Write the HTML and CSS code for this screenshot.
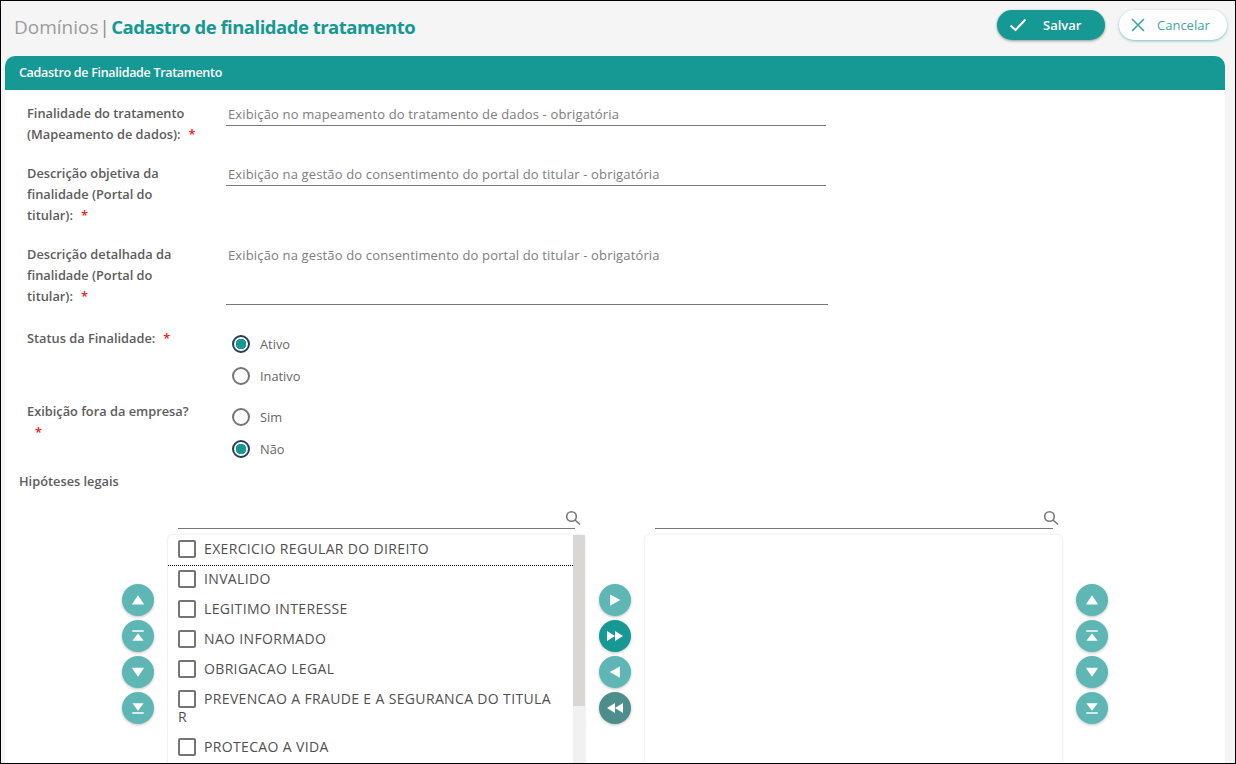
FILE: index.html
```html
<!DOCTYPE html>
<html lang="pt-BR">

<head>
    <meta charset="UTF-8">
    <meta name="viewport" content="width=device-width, initial-scale=1.0">
    <title>Cadastro de finalidade tratamento</title>
    <link rel="stylesheet" href="styles.css">
</head>

<body>
    <svg class="icon-defs" width="0" height="0">
        <symbol id="i-up" viewBox="0 0 16 16"><path d="M8 2.500 15 13H1z" /></symbol>
        <symbol id="i-top" viewBox="0 0 16 16"><path d="M1.500 1.500h13v1.600h-13zM8 5l6.500 8.500h-13z" /></symbol>
        <symbol id="i-down" viewBox="0 0 16 16"><path d="M1 3h14L8 13.500z" /></symbol>
        <symbol id="i-bottom" viewBox="0 0 16 16"><path d="M1.500 2.500h13L8 11zM1.500 12.900h13v1.600h-13z" /></symbol>
        <symbol id="i-right" viewBox="0 0 16 16"><path d="M1.500 .5 15 8 1.500 15.500z" /></symbol>
        <symbol id="i-left" viewBox="0 0 16 16"><path d="M14.500 .5V15.500L1 8z" /></symbol>
        <symbol id="i-all-right" viewBox="0 0 16 12"><path d="M0 1 8 6 0 11zM8 1l8 5-8 5z" /></symbol>
        <symbol id="i-all-left" viewBox="0 0 16 12"><path d="M8 1v10L0 6zM16 1v10L8 6z" /></symbol>
        <symbol id="i-search" viewBox="0 0 16 16"><circle cx="6.500" cy="6.500" r="4.800" /><path d="M10 10l5 4.500" /></symbol>
    </svg>

    <div class="page">
        <header class="top-bar">
            <h1 class="title"><span class="title-muted">Domínios</span><span class="title-sep">|</span>Cadastro de finalidade tratamento</h1>
            <div class="actions">
                <button class="btn btn-save" type="button">
                    <svg width="18" height="14" viewBox="0 0 18 14"><path d="M1.500 7.500 6.500 12 16.500 1.500" /></svg>
                    Salvar
                </button>
                <button class="btn btn-cancel" type="button">
                    <svg width="14" height="14" viewBox="0 0 14 14"><path d="M1 1l12 12M13 1 1 13" /></svg>
                    Cancelar
                </button>
            </div>
        </header>

        <section class="panel">
            <h2 class="panel-title">Cadastro de Finalidade Tratamento</h2>

            <div class="form">
                <div class="row">
                    <label class="row-label">Finalidade do tratamento (Mapeamento de dados):<span class="req">*</span></label>
                    <input class="field" type="text" placeholder="Exibição no mapeamento do tratamento de dados - obrigatória">
                </div>
                <div class="row">
                    <label class="row-label">Descrição objetiva da finalidade (Portal do titular):<span class="req">*</span></label>
                    <input class="field" type="text" placeholder="Exibição na gestão do consentimento do portal do titular - obrigatória">
                </div>
                <div class="row row-area">
                    <label class="row-label">Descrição detalhada da finalidade (Portal do titular):<span class="req">*</span></label>
                    <textarea class="field field-area" placeholder="Exibição na gestão do consentimento do portal do titular - obrigatória"></textarea>
                </div>
                <div class="row row-radio">
                    <label class="row-label">Status da Finalidade:<span class="req">*</span></label>
                    <div class="radios">
                        <div class="radio checked"><span class="radio-mark"></span>Ativo</div>
                        <div class="radio"><span class="radio-mark"></span>Inativo</div>
                    </div>
                </div>
                <div class="row row-radio row-last">
                    <label class="row-label">Exibição fora da empresa?<br><span class="req">*</span></label>
                    <div class="radios">
                        <div class="radio"><span class="radio-mark"></span>Sim</div>
                        <div class="radio checked"><span class="radio-mark"></span>Não</div>
                    </div>
                </div>
            </div>

            <h3 class="section-label">Hipóteses legais</h3>

            <div class="picklist">
                <div class="move-col">
                    <button class="round" type="button"><svg><use href="#i-up" /></svg></button>
                    <button class="round" type="button"><svg><use href="#i-top" /></svg></button>
                    <button class="round" type="button"><svg><use href="#i-down" /></svg></button>
                    <button class="round" type="button"><svg><use href="#i-bottom" /></svg></button>
                </div>

                <div class="list-col">
                    <div class="search">
                        <svg class="search-icon"><use href="#i-search" /></svg>
                    </div>
                    <div class="list-box">
                        <ul class="list">
                            <li class="focused"><span class="check"></span>EXERCICIO REGULAR DO DIREITO</li>
                            <li><span class="check"></span>INVALIDO</li>
                            <li><span class="check"></span>LEGITIMO INTERESSE</li>
                            <li><span class="check"></span>NAO INFORMADO</li>
                            <li><span class="check"></span>OBRIGACAO LEGAL</li>
                            <li><span class="check"></span>PREVENCAO A FRAUDE E A SEGURANCA DO TITULA<br>R</li>
                            <li><span class="check"></span>PROTECAO A VIDA</li>
                        </ul>
                        <div class="scrollbar"><div class="scroll-thumb"></div></div>
                    </div>
                </div>

                <div class="move-col">
                    <button class="round" type="button"><svg class="small"><use href="#i-right" /></svg></button>
                    <button class="round round-active" type="button"><svg class="double"><use href="#i-all-right" /></svg></button>
                    <button class="round" type="button"><svg class="small"><use href="#i-left" /></svg></button>
                    <button class="round round-dark" type="button"><svg class="double"><use href="#i-all-left" /></svg></button>
                </div>

                <div class="list-col list-col-right">
                    <div class="search">
                        <svg class="search-icon"><use href="#i-search" /></svg>
                    </div>
                    <div class="list-box"></div>
                </div>

                <div class="move-col">
                    <button class="round" type="button"><svg><use href="#i-up" /></svg></button>
                    <button class="round" type="button"><svg><use href="#i-top" /></svg></button>
                    <button class="round" type="button"><svg><use href="#i-down" /></svg></button>
                    <button class="round" type="button"><svg><use href="#i-bottom" /></svg></button>
                </div>
            </div>
        </section>
    </div>
</body>

</html>
```

FILE: styles.css
```css
* {
    box-sizing: border-box;
}

html, body {
    margin: 0;
    height: 764px;
    overflow: hidden;
}

body {
    font-family: 'Open Sans', 'Noto Sans', sans-serif;
    color: #4a4a4a;
}

.icon-defs {
    position: absolute;
}

.page {
    height: 764px;
    border: 1px solid #000;
    background-color: #f5f5f5;
    overflow: hidden;
}

.top-bar {
    display: flex;
    justify-content: space-between;
    align-items: center;
    height: 55px;
    padding: 0 8px 7px 13px;
}

.title {
    margin: 0;
    padding-top: 4px;
    font-size: 18.500px;
    font-weight: 700;
    letter-spacing: -0.500px;
    color: #169894;
}

.title-muted {
    font-size: 19px;
    font-weight: 400;
    letter-spacing: 0;
    color: #9b9b9b;
}

.title-sep {
    font-weight: 400;
    color: #8a8a8a;
    margin: 0 2px 0 1px;
}

.actions {
    display: flex;
    gap: 14px;
}

.btn {
    display: flex;
    align-items: center;
    width: 108px;
    height: 30px;
    border: none;
    border-radius: 15px;
    padding: 0 0 0 12px;
    font-family: inherit;
    font-size: 13px;
    font-weight: 600;
}

.btn svg {
    fill: none;
    stroke: currentColor;
    stroke-width: 2;
}

.btn-save {
    gap: 16px;
    background-color: #169894;
    color: #fff;
    box-shadow: 0 1px 3px rgba(0, 0, 0, 0.4);
}

.btn-cancel {
    gap: 12px;
    background-color: #fff;
    color: #3ea5a2;
    font-weight: 400;
    box-shadow: 0 1px 3px rgba(22, 152, 148, 0.55);
}

.btn-cancel svg {
    stroke-width: 1.600;
}

.panel {
    margin: 0 10px 0 4px;
    height: 720px;
    background: #fff;
    border-radius: 10px 10px 0 0;
}

.panel-title {
    margin: 0;
    height: 34px;
    padding-left: 14px;
    line-height: 34px;
    font-size: 12.500px;
    font-weight: 600;
    letter-spacing: -0.300px;
    color: #fff;
    background-color: #169894;
    border-radius: 10px 10px 0 0;
}

.form {
    padding: 13px 0 0 22px;
}

.row {
    display: flex;
    align-items: flex-start;
    margin-bottom: 18px;
}

.row-area {
    margin-bottom: 21px;
}

.row-radio {
    margin-bottom: 9px;
}

.row-last {
    margin-bottom: 6px;
}

.row-label {
    width: 199px;
    padding-right: 30px;
    font-size: 12.800px;
    font-weight: 600;
    line-height: 21px;
    color: #5c5c5c;
}

.req {
    margin-left: 8px;
    color: #f01010;
}

.field {
    display: block;
    width: 600px;
    height: 24px;
    margin: -1px 0 0;
    padding: 2px;
    border: none;
    border-bottom: 1px solid #777;
    outline: none;
    background: transparent;
    font-family: inherit;
    font-size: 13px;
    letter-spacing: 0.150px;
}

.field::placeholder {
    color: #7d7d7d;
    opacity: 1;
}

.field-area {
    width: 602px;
    height: 61px;
    margin-top: 0;
    resize: none;
}

.radios {
    padding-left: 6px;
}

.radio {
    display: flex;
    align-items: center;
    gap: 10px;
    height: 32px;
    font-size: 12.800px;
    color: #666;
}

.radio-mark {
    display: block;
    width: 18px;
    height: 18px;
    border: 2px solid #757575;
    border-radius: 50%;
}

.checked .radio-mark {
    border-color: #22405a;
    background: radial-gradient(circle, #169894 0, #169894 5px, #fff 5.500px);
}

.section-label {
    margin: 0 0 0 14px;
    font-size: 12.800px;
    font-weight: 600;
    line-height: 21px;
    color: #5c5c5c;
}

.picklist {
    display: grid;
    grid-template-columns: 32px 417px 32px 417px 32px;
    column-gap: 14px;
    margin: 13px 0 0 117px;
}

.move-col {
    display: flex;
    flex-direction: column;
    gap: 4px;
    padding-top: 79px;
}

.round {
    display: flex;
    align-items: center;
    justify-content: center;
    width: 32px;
    height: 32px;
    padding: 0;
    border: none;
    border-radius: 50%;
    background-color: #5fb7b5;
    box-shadow: 0 1px 3px rgba(0, 0, 0, 0.25);
}

.round svg {
    width: 14px;
    height: 14px;
    fill: #fff;
}

.round svg.small {
    width: 12px;
    height: 12px;
}

.round svg.double {
    width: 16px;
    height: 12px;
}

.round-active {
    background-color: #169894;
}

.round-dark {
    background-color: #4d8e8c;
}

.search {
    position: relative;
    height: 24px;
    margin: 0 10px 6px 10px;
    border-bottom: 1px solid #777;
}

.search-icon {
    position: absolute;
    right: -6px;
    top: 5px;
    width: 16px;
    height: 16px;
    fill: none;
    stroke: #777;
    stroke-width: 1.600;
}

.list-box {
    display: flex;
    justify-content: space-between;
    height: 300px;
    background: #fff;
    border-radius: 4px 4px 0 0;
    box-shadow: 0 0 2px rgba(0, 0, 0, 0.18);
}

.list {
    flex: 1;
    margin: -1px 0 0;
    padding: 0;
    list-style: none;
    font-size: 14px;
    letter-spacing: 0.350px;
    line-height: 18px;
    color: #4f4f4f;
}

.list li {
    padding: 6px 0 6px 10px;
}

.list li.focused {
    border-bottom: 1px dotted #000;
    padding-bottom: 7px;
    margin-bottom: -2px;
}

.check {
    display: inline-block;
    width: 18px;
    height: 18px;
    margin-right: 8px;
    border: 2px solid #757575;
    border-radius: 2px;
    vertical-align: top;
}

.scrollbar {
    width: 12px;
    background-color: #f1f1f1;
}

.scroll-thumb {
    height: 171px;
    background-color: #d8d7d6;
}

.list-col-right .search {
    margin: 0 9px 6px 10px;
}
```
